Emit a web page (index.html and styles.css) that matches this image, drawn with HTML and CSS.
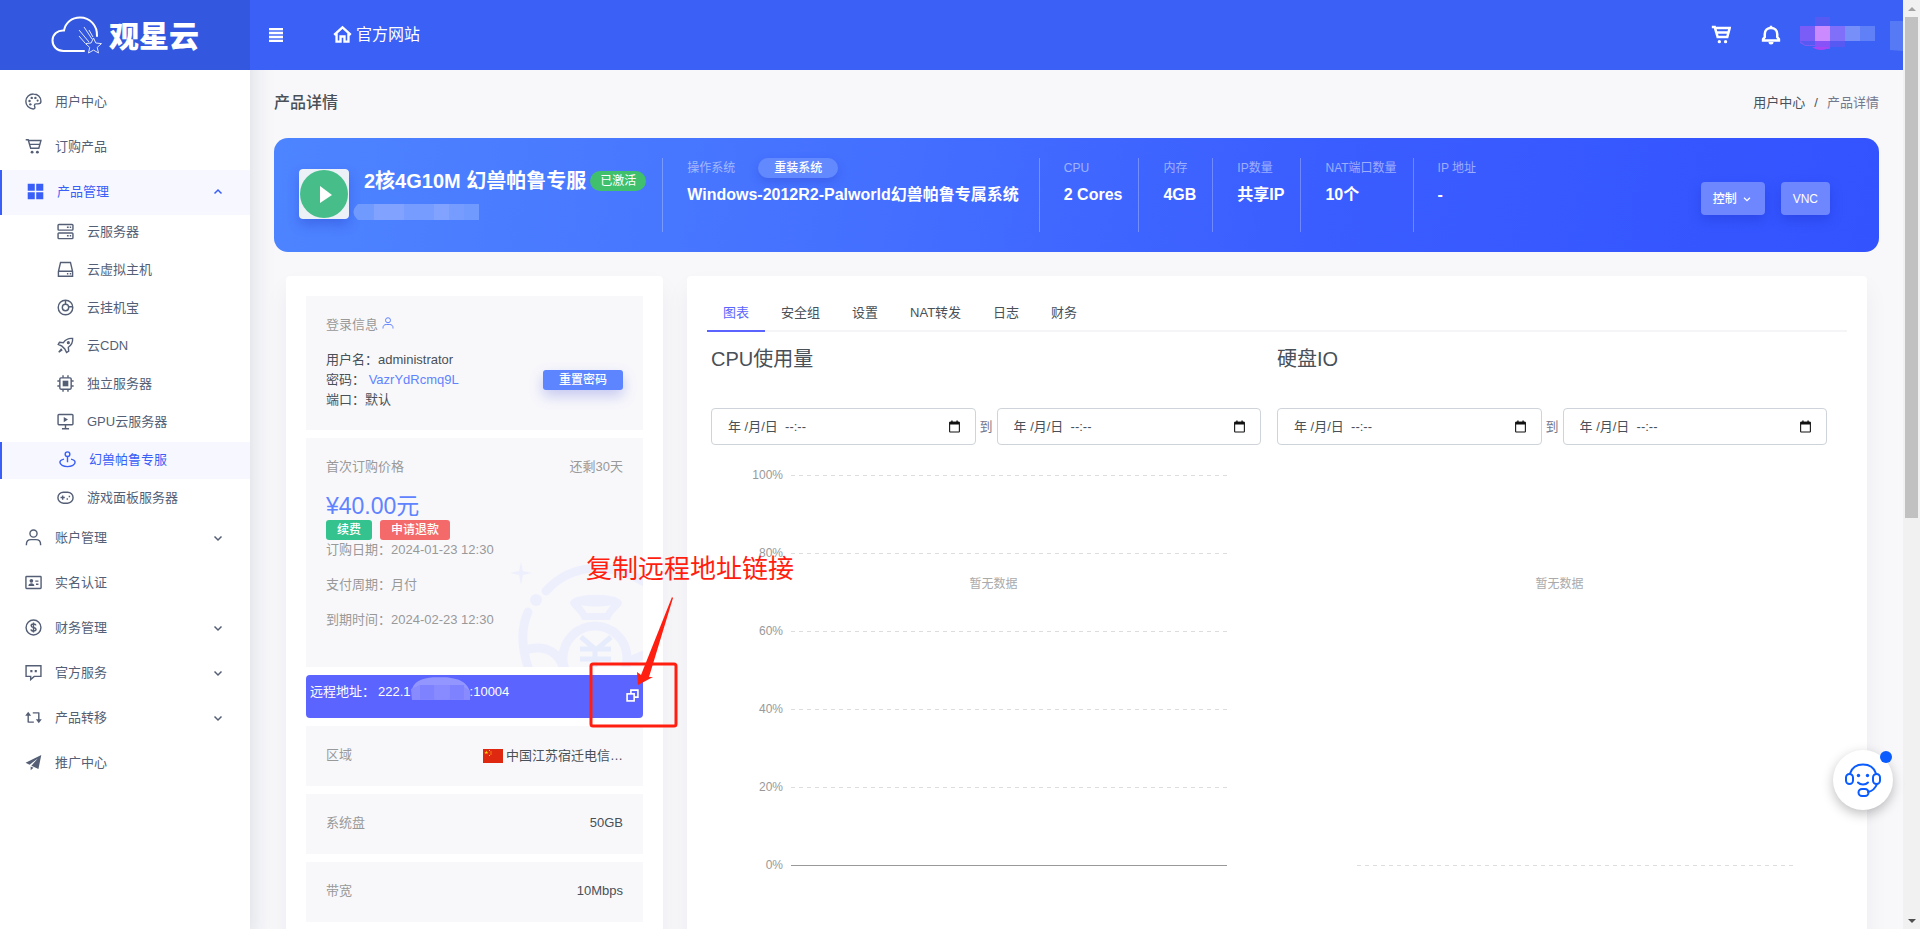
FILE: index.html
```html
<!DOCTYPE html>
<html lang="zh-CN">
<head>
<meta charset="utf-8">
<title>产品详情</title>
<link rel="stylesheet" href="styles.css">
</head>
<body>
<svg class="defs" aria-hidden="true">
  <symbol id="i-palette" viewBox="0 0 24 24"><path d="M12 1.500a10.500 10.500 0 0 0-.6 21c1.600.1 2.600-.8 2.600-2.200 0-1-.7-1.700-.7-2.700 0-1.300 1-2.200 2.300-2.200h2.900c2.300 0 4-1.300 4-3.700C22.500 5.500 17.800 1.500 12 1.500z"/><g class="solid"><circle cx="9.500" cy="6.900" r="1.700"/><circle cx="14.700" cy="6.900" r="1.700"/><circle cx="17.800" cy="10.700" r="1.500"/><circle cx="6.400" cy="11.300" r="1.700"/><circle cx="7.500" cy="16" r="1.700"/></g></symbol>
  <symbol id="i-cart" viewBox="0 0 24 24"><path d="M1 2.500H4.500L8 14.500h11.500L22.500 3.500H5M6 9h14.500"/><g class="solid"><circle cx="10" cy="20" r="2"/><circle cx="17.500" cy="20" r="2"/></g></symbol>
  <symbol id="i-grid" viewBox="0 0 24 24"><path class="solid" d="M1 1h10v10H1zM13 1h10v10H13zM1 13h10v10H1zM13 13h10v10H13z"/></symbol>
  <symbol id="i-server" viewBox="0 0 24 24"><rect x="1.500" y="2" width="21" height="8" rx="1.200"/><rect x="1.500" y="14" width="21" height="8" rx="1.200"/><path d="M14 6h2.500M18 6h2M14 18h2.500M18 18h2"/></symbol>
  <symbol id="i-hdd" viewBox="0 0 24 24"><path d="M5 2h14l3 13v6.500H2V15zM2 14.500h20"/><path d="M14 18h2M18 18h2"/></symbol>
  <symbol id="i-disc" viewBox="0 0 24 24"><circle cx="12" cy="12" r="10.300"/><circle cx="12" cy="12" r="4.500"/><path d="M12 2v5.500M16.500 11h5.500"/></symbol>
  <symbol id="i-rocket" viewBox="0 0 24 24"><path d="M22 2c-6-.5-10 1.500-13 6L3.500 7.500 1.800 10.500 7 13l4 4 2.500 5 3-2L16 14.500c4.500-3 6.500-7 6-12.500zM6.500 16.500l-4 5 5-3.500"/><circle class="solid" cx="16" cy="8" r="2.200"/></symbol>
  <symbol id="i-chip" viewBox="0 0 24 24"><rect x="4" y="4" width="16" height="16" rx="1.500"/><path class="solid" d="M8 8h8v8H8z"/><path d="M8.500 4V.5M15.500 4V.5M8.500 23.500V20M15.500 23.500V20M4 8.500H.5M4 15.500H.5M23.500 8.500H20M23.500 15.500H20"/></symbol>
  <symbol id="i-screen" viewBox="0 0 24 24"><rect x="1.500" y="2" width="21" height="14.500" rx="1.200"/><path d="M12 17v5M7 22.300h10"/><path class="solid" d="M9.500 5.500l6 3.700-6 3.700z"/></symbol>
  <symbol id="i-joy" viewBox="0 0 24 24"><circle cx="12" cy="4.500" r="3.300"/><path d="M12 8v8M7 11.500c-3.500.8-5.700 2.300-5.700 4.500 0 3.400 4.700 6 10.700 6s10.700-2.600 10.700-6c0-2.200-2.200-3.700-5.700-4.500"/></symbol>
  <symbol id="i-game" viewBox="0 0 24 24"><rect x="1.300" y="4.500" width="21.400" height="15.500" rx="7.700"/><path d="M5 12h6M8 9v6M13.500 14h2M16.500 10.500h2"/></symbol>
  <symbol id="i-user" viewBox="0 0 24 24"><circle cx="12" cy="6.500" r="5"/><path d="M2 23v-1.500c0-4 2.500-6.500 6.500-6.500h7c4 0 6.500 2.500 6.500 6.500V23"/></symbol>
  <symbol id="i-id" viewBox="0 0 24 24"><rect x="1.300" y="3.500" width="21.400" height="17" rx="1"/><g class="solid"><circle cx="9" cy="9.700" r="2.600"/><path d="M4.800 16.800c0-5 8.400-5 8.400 0z"/></g><path d="M14.500 10h4.500M15.500 14.500H19"/></symbol>
  <symbol id="i-dollar" viewBox="0 0 24 24"><circle cx="12" cy="12" r="10.500"/><path d="M15.500 9c-.3-1.300-1.500-2-3.400-2-2 0-3.400.8-3.400 2.400 0 3.500 6.900 1.700 6.900 5.200 0 1.600-1.500 2.400-3.500 2.400-2.100 0-3.500-.9-3.700-2.400M12 5v14"/></symbol>
  <symbol id="i-chat" viewBox="0 0 24 24"><path d="M1.500 2.500h21v15H13l-5 4.500v-4.500H1.500z"/><path class="solid" d="M7.500 8.500h3v3h-3zM13.700 8.500h3v3h-3z"/></symbol>
  <symbol id="i-transfer" viewBox="0 0 24 24"><path d="M4.500 18.500h8M4.500 19V8M11 5.500h9M19.500 5v11"/><path class="solid" d="M.3 9.500L4.500 4l4.200 5.500zM15.300 14.500l4.200 5.500 4.200-5.500z"/></symbol>
  <symbol id="i-plane" viewBox="0 0 24 24"><path class="solid" d="M23 1.500L.8 12.500l5.700 2.600L18 6.500 9 16.500l10 4.500zM8 17.500v5.500l4-3.700z"/></symbol>
  <symbol id="i-down" viewBox="0 0 24 24"><path d="M5 9l7 7 7-7"/></symbol>
  <symbol id="i-home" viewBox="0 0 24 24"><path d="M1.500 12.500L12 3l10.500 9.500M4.500 10.500V21h5v-6.500h5V21h5V10.500"/></symbol>
  <symbol id="i-bell" viewBox="0 0 24 24"><path d="M2.500 18.500v-1.500l2-2.500V11c0-4.500 3-7.500 7.500-7.500s7.500 3 7.500 7.500v3.500l2 2.500v1.500zM12 3.500V1"/><path class="solid" d="M9 20.500h6a3 3 0 0 1-6 0z"/></symbol>
  <symbol id="i-copy" viewBox="0 0 24 24"><rect x="2" y="9" width="13" height="13"/><path d="M9 9V2h13v13h-7"/></symbol>
  <symbol id="i-calendar" viewBox="0 0 24 24"><rect x="3" y="4" width="18" height="18" rx="1"/><path class="solid" d="M3 3h18v5.500H3zM6 1h2.500v4H6zM15.500 1H18v4h-2.500z"/></symbol>
</svg>

<div class="shell">
  <aside class="sidebar">
    <a class="brand" href="#">
      <svg class="cloud" viewBox="0 0 52 38" aria-hidden="true"><path d="M33 35H12.500C6 35 1.500 30.500 1.500 24.500S6.500 14 13 14.500C14.500 6.500 21 1.500 29 1.500c10 0 17.500 8 17 18.500" class="cl"/><path d="M28 14l10 12M33 11l8 12M38 14l4 7M28 20l6 7" class="st"/><path d="M42.500 22l2.300 5 5.700.6-4.300 3.800 1.300 5.600-5-2.900-5 2.900 1.200-5.600-4.200-3.800 5.600-.6z" class="st"/></svg>
      <span class="brand-name">观星云</span>
    </a>
    <nav class="menu">
      <a class="item" href="#"><svg><use href="#i-palette"/></svg><span>用户中心</span></a>
      <a class="item" href="#"><svg><use href="#i-cart"/></svg><span>订购产品</span></a>
      <a class="item active" href="#"><svg><use href="#i-grid"/></svg><span>产品管理</span><svg class="chev up"><use href="#i-down"/></svg></a>
      <div class="submenu">
        <a class="item sub" href="#"><svg><use href="#i-server"/></svg><span>云服务器</span></a>
        <a class="item sub" href="#"><svg><use href="#i-hdd"/></svg><span>云虚拟主机</span></a>
        <a class="item sub" href="#"><svg><use href="#i-disc"/></svg><span>云挂机宝</span></a>
        <a class="item sub" href="#"><svg><use href="#i-rocket"/></svg><span>云CDN</span></a>
        <a class="item sub" href="#"><svg><use href="#i-chip"/></svg><span>独立服务器</span></a>
        <a class="item sub" href="#"><svg><use href="#i-screen"/></svg><span>GPU云服务器</span></a>
        <a class="item sub active" href="#"><svg><use href="#i-joy"/></svg><span>幻兽帕鲁专服</span></a>
        <a class="item sub" href="#"><svg><use href="#i-game"/></svg><span>游戏面板服务器</span></a>
      </div>
      <a class="item" href="#"><svg><use href="#i-user"/></svg><span>账户管理</span><svg class="chev"><use href="#i-down"/></svg></a>
      <a class="item" href="#"><svg><use href="#i-id"/></svg><span>实名认证</span></a>
      <a class="item" href="#"><svg><use href="#i-dollar"/></svg><span>财务管理</span><svg class="chev"><use href="#i-down"/></svg></a>
      <a class="item" href="#"><svg><use href="#i-chat"/></svg><span>官方服务</span><svg class="chev"><use href="#i-down"/></svg></a>
      <a class="item" href="#"><svg><use href="#i-transfer"/></svg><span>产品转移</span><svg class="chev"><use href="#i-down"/></svg></a>
      <a class="item" href="#"><svg><use href="#i-plane"/></svg><span>推广中心</span></a>
    </nav>
  </aside>

  <div class="page">
    <header class="topbar">
      <button class="burger" aria-label="菜单"><i></i><i></i><i></i><i></i></button>
      <a class="site" href="#"><svg><use href="#i-home"/></svg>官方网站</a>
      <div class="tools">
        <button aria-label="购物车"><svg><use href="#i-cart"/></svg></button>
        <button aria-label="通知"><svg><use href="#i-bell"/></svg></button>
        <svg class="account" viewBox="0 0 120 38" aria-hidden="true"><path fill="#7a5cf6" d="M0 10h15v20H5l-5-3z"/><path fill="#565af3" d="M15 1h15v9H15zM0 25h15v4H5zM30 25h15v6H30z"/><path fill="#cb8bff" d="M15 10h15v15H15z"/><path fill="#8753f8" d="M15 25h15v8H15z"/><path fill="#a646f5" d="M12 31h18c-5 4-13 4-18 0z"/><path fill="#7f6ff9" d="M30 10h15v15H30z"/><path fill="#7790f9" d="M45 10h15v15H45z"/><path fill="#6080f8" d="M60 10h15v15H60z"/><path fill="#5679f6" d="M90 5h13v30l-13-1z"/></svg>
      </div>
    </header>

    <main class="content">
      <div class="heading">
        <h1>产品详情</h1>
        <nav class="crumbs"><a href="#">用户中心</a><i>/</i><span>产品详情</span></nav>
      </div>

      <section class="hero">
        <div class="spec product">
          <svg class="status" viewBox="0 0 50 50" aria-hidden="true"><rect width="50" height="50" rx="3" fill="#ecf1f7"/><circle cx="25" cy="25" r="24" fill="#47be8a"/><path d="M21 17l12 9-12 8z" fill="#fff"/></svg>
          <div class="product-text">
            <div class="product-line"><strong>2核4G10M 幻兽帕鲁专服</strong><span class="badge">已激活</span></div>
            <svg class="mask" viewBox="0 0 126 16" aria-hidden="true"><path fill="#709afe" d="M5 0h121v16H5C-1 11-1 5 5 0z"/><path fill="#81a3ff" d="M21 0h30v16H21zM81 0h15v16H81z"/><path fill="#779cff" d="M51 0h30v16H51zM96 0h15v16H96z"/></svg>
          </div>
        </div>
        <div class="spec os"><div class="label">操作系统 <button class="pill">重装系统</button></div><b>Windows-2012R2-Palworld幻兽帕鲁专属系统</b></div>
        <div class="spec"><div class="label">CPU</div><b>2 Cores</b></div>
        <div class="spec"><div class="label">内存</div><b>4GB</b></div>
        <div class="spec"><div class="label">IP数量</div><b>共享IP</b></div>
        <div class="spec"><div class="label">NAT端口数量</div><b>10个</b></div>
        <div class="spec"><div class="label">IP 地址</div><b>-</b></div>
        <div class="actions"><button>控制<svg><use href="#i-down"/></svg></button><button>VNC</button></div>
      </section>

      <div class="columns">
        <section class="card info">
          <div class="box login">
            <div class="muted">登录信息 <svg class="mini"><use href="#i-user"/></svg></div>
            <div class="login-row">
              <div class="creds"><div>用户名：administrator</div><div>密码： <a href="#">VazrYdRcmq9L</a></div><div>端口：默认</div></div>
              <button class="small blue">重置密码</button>
            </div>
          </div>
          <div class="box billing">
            <svg class="bag" viewBox="0 0 129 105" aria-hidden="true"><g fill="none" stroke="#edf0fc" stroke-width="9" stroke-linecap="round"><path d="M14 50C6 68 8 88 15 108M32 29C58 0 100 0 134 22"/><path d="M15 87c20-4 32 6 35 22M118 98l14-6"/><circle cx="81" cy="96" r="32"/></g><path fill="#edf0fc" fill-rule="evenodd" d="M7 0l2 9 9 2-9 2-2 10-2-10-9-2 9-2zM56 41c0-11 52-11 52 0 0 4-10 9-12 17H68c-2-8-12-13-12-17zm11 2l6 8h18l6-8c-8 2-22 2-30 0z"/><circle cx="22" cy="38" r="6" fill="#edf0fc"/><path d="M67 75l15 13 15-13M66 87h31M66 97h31M81 88v20" fill="none" stroke="#e6ecfb" stroke-width="5"/></svg>
            <div class="split muted"><span>首次订购价格</span><span>还剩30天</span></div>
            <div class="price">¥40.00元</div>
            <div class="pay"><button class="small green">续费</button><button class="small red">申请退款</button></div>
            <div class="dates muted"><div>订购日期：2024-01-23 12:30</div><div>支付周期：月付</div><div>到期时间：2024-02-23 12:30</div></div>
          </div>
          <div class="remote">
            <span>远程地址：</span><span class="ip">222.1</span><svg class="veil" viewBox="0 0 60 23" aria-hidden="true"><path fill="#9396ff" d="M1 23V12C4 2 16 0 26 0h10c7 1 9 2 11 2 7 2 12 8 13 13v8z"/><path fill="#7f82ff" d="M9 8h15v15H9zM39 8h15v15H39z"/><path fill="#888bff" d="M0 12l9-4v15H1zM24 8h15v15H24zM54 10l6 4v9h-6z"/></svg><span>:10004</span>
            <button class="copy" aria-label="复制"><svg><use href="#i-copy"/></svg></button>
          </div>
          <div class="box fact"><span class="muted">区域</span><span class="place"><svg class="flag" viewBox="0 0 20 14" aria-hidden="true"><path fill="#de2910" d="M0 0h20v14H0z"/><path fill="#ffde00" d="M3.300 1.500l.5 1.400h1.500l-1.200.9.500 1.400-1.300-.9-1.200.9.400-1.400-1.200-.9h1.500zM6 1h1v1H6zM7.500 2.500h1v1h-1zM7.500 4.500h1v1h-1zM6 6h1v1H6z"/></svg>中国江苏宿迁电信…</span></div>
          <div class="box fact"><span class="muted">系统盘</span><span>50GB</span></div>
          <div class="box fact"><span class="muted">带宽</span><span>10Mbps</span></div>

          <div class="note">
            <p>复制远程地址链接</p>
            <svg viewBox="0 0 92 132" aria-hidden="true"><rect x="2" y="67" width="85" height="62" rx="2" fill="none" stroke="#ff1e10" stroke-width="3"/><path fill="#ff1e10" d="M84 1L60 80l4 0-15 8-1-13 4 3L83 0z"/></svg>
          </div>
        </section>

        <section class="card detail">
          <div class="tabs" role="tablist"><button role="tab" class="on">图表</button><button role="tab">安全组</button><button role="tab">设置</button><button role="tab">NAT转发</button><button role="tab">日志</button><button role="tab">财务</button></div>
          <div class="charts">
            <div class="chart">
              <h2>CPU使用量</h2>
              <div class="range">
                <div class="when"><input aria-label="CPU开始时间" value="年 /月/日&nbsp;&nbsp;--:--"><svg><use href="#i-calendar"/></svg></div>
                <span>到</span>
                <div class="when"><input aria-label="CPU结束时间" value="年 /月/日&nbsp;&nbsp;--:--"><svg><use href="#i-calendar"/></svg></div>
              </div>
              <div class="plot">
                <div class="tick"><span>100%</span><i></i></div>
                <div class="tick"><span>80%</span><i></i></div>
                <div class="tick"><span>60%</span><i></i></div>
                <div class="tick"><span>40%</span><i></i></div>
                <div class="tick"><span>20%</span><i></i></div>
                <div class="tick"><span>0%</span><i class="base"></i></div>
                <div class="empty">暂无数据</div>
              </div>
            </div>
            <div class="chart">
              <h2>硬盘IO</h2>
              <div class="range">
                <div class="when"><input aria-label="硬盘开始时间" value="年 /月/日&nbsp;&nbsp;--:--"><svg><use href="#i-calendar"/></svg></div>
                <span>到</span>
                <div class="when"><input aria-label="硬盘结束时间" value="年 /月/日&nbsp;&nbsp;--:--"><svg><use href="#i-calendar"/></svg></div>
              </div>
              <div class="plot bare">
                <div class="tick"><span></span><i></i></div>
                <div class="empty">暂无数据</div>
              </div>
            </div>
          </div>
        </section>
      </div>
    </main>
    <button class="service" aria-label="在线客服">
      <svg viewBox="0 0 36 34" aria-hidden="true"><g fill="none" stroke="#0a5cff" stroke-width="2" stroke-linecap="round"><path d="M5 10.500C7 4.500 12 1.500 18 1.500s11 3 13 9M32 21c-1.500 4-4.500 7-9 8"/><rect x="1" y="11" width="7" height="10" rx="3.500"/><rect x="28" y="11" width="7" height="10" rx="3.500"/><rect x="13.500" y="26" width="10" height="7" rx="3.500"/><path d="M13 19.500c2.500 2.700 7.500 2.700 10 0"/></g><circle cx="13.500" cy="12.500" r="1.700" fill="#0a5cff"/><circle cx="22.500" cy="12.500" r="1.700" fill="#0a5cff"/></svg>
    </button>
  </div>

  <div class="scroll" aria-hidden="true"><i class="tri up"></i><div class="track"><div class="thumb"></div></div><i class="tri"></i></div>
</div>
</body>
</html>
```
FILE: styles.css
```css
* { box-sizing: border-box; }
body {
  margin: 0;
  font: 13px/20px "Liberation Sans", "Noto Sans CJK SC", sans-serif;
  color: #495057;
  background: #f8f8fb;
}
a { color: inherit; text-decoration: none; }
i { font-style: normal; }
button { font: inherit; color: inherit; border: 0; padding: 0; background: none; cursor: pointer; }
svg { fill: none; stroke: currentColor; stroke-width: 2; flex: none; }
svg .solid { fill: currentColor; stroke: none; }
svg[viewBox] { stroke: none; }
.defs { position: absolute; width: 0; height: 0; }

.shell { display: grid; grid-template-columns: 250px minmax(0, 1fr) 17px; grid-template-rows: minmax(0, 1fr); height: 100vh; overflow: hidden; }

/* sidebar */
.sidebar { background: #fff; box-shadow: 0 12px 24px rgba(18, 38, 63, .15); z-index: 1; }
.brand { display: flex; align-items: center; justify-content: center; gap: 6px; height: 70px; background: #3358df; color: #fff; }
.cloud { width: 52px; height: 38px; }
.cloud .cl { stroke: #fff; stroke-width: 2; fill: none; stroke-linecap: round; }
.cloud .st { stroke: #dfe6fb; stroke-width: 1; fill: none; }
.brand-name { padding-top: 4px; font-size: 30px; line-height: 40px; font-weight: 900; }
.menu { padding-top: 10px; color: #545f76; }
.item { display: flex; align-items: center; gap: 13px; height: 45px; padding: 0 26px 2px 25px; }
.item svg { width: 17px; height: 17px; }
.item.active { color: #3a5ff6; background: #f7f8ff; border-left: 2px solid #3a5ff6; }
.item .chev { width: 12px; height: 12px; margin-left: auto; stroke-width: 3; }
.chev.up { transform: rotate(180deg); }
.submenu { display: grid; gap: 1px; margin: -1px 0; }
.item.sub { height: 37px; padding-left: 57px; }

/* top bar */
.page { min-width: 0; position: relative; }
.topbar { position: relative; z-index: 2; display: flex; align-items: center; height: 70px; padding-left: 19px; background: #3a60f6; color: #fff; }
.burger { display: grid; gap: 2px; width: 14px; background: rgba(255, 255, 255, .3); }
.burger i { height: 2px; background: #fff; }
.site { display: flex; align-items: center; gap: 4px; margin-left: 50px; padding-bottom: 1px; font-size: 16px; }
.site svg { width: 19px; height: 19px; stroke-width: 3; }
.tools { display: flex; align-items: center; margin-left: auto; }
.tools button { display: flex; margin-right: 30px; padding-bottom: 1px; }
.tools button + button { margin-right: 19px; }
.tools button svg { width: 20px; height: 20px; stroke-width: 3; }
.account { width: 120px; height: 38px; margin: 0 -17px 0 0; }

.content { padding: 20px 24px 0; }
.heading { display: flex; justify-content: space-between; align-items: center; height: 26px; margin-bottom: 22px; }
.heading h1 { margin: 0; font-size: 16px; line-height: 26px; font-weight: 500; }
.crumbs { display: flex; gap: 8px; }
.crumbs a { color: #495057; }
.crumbs span { color: #74788d; }
.crumbs i { padding: 0 1px; }

/* product banner */
.hero { display: flex; height: 114px; padding: 20px 49px 20px 25px; border-radius: 14px; background: linear-gradient(100deg, #4d84ff, #4571ff 35%, #3a5dff 65%, #3353ff); color: #fff; }
.spec { height: 74px; padding: 0 16px 0 24px; border-left: 1px solid rgba(255, 255, 255, .27); white-space: nowrap; }
.spec.product { display: flex; padding-left: 0; border-left: 0; }
.spec.os { padding-right: 20px; }
.status { width: 50px; height: 50px; margin-top: 11px; border-radius: 4px; box-shadow: 0 6px 12px rgba(30, 50, 190, .3); }
.product-text { padding: 11px 0 0 4px; }
.product-line { display: flex; align-items: center; gap: 4px; height: 24px; padding-left: 11px; }
.product-line strong { font-size: 20px; line-height: 24px; }
.badge { width: 56px; border-radius: 10px; background: #40bf6c; font-size: 12px; line-height: 20px; text-align: center; }
.mask { display: block; width: 126px; height: 16px; margin-top: 11px; }
.spec .label { display: flex; gap: 23px; font-size: 12px; line-height: 20px; color: rgba(255, 255, 255, .5); }
.spec b { display: block; margin-top: 5px; font-size: 16px; line-height: 24px; }
.pill { width: 80px; height: 20px; border-radius: 10px; background: #6389ff; color: #fff; font-weight: 500; box-shadow: 0 4px 10px rgba(40, 60, 200, .3); }
.actions { display: flex; align-items: flex-start; gap: 16px; margin-left: auto; padding-top: 24px; }
.actions button { display: flex; align-items: center; gap: 5px; height: 33px; padding: 0 12px; border-radius: 4px; background: #6e87ff; font-size: 12px; font-weight: 500; box-shadow: 0 5px 12px rgba(30, 50, 200, .4); }
.actions svg { width: 10px; height: 10px; margin-right: 1px; stroke-width: 3; }

/* cards */
.columns { display: grid; grid-template-columns: 377px minmax(0, 1fr); gap: 24px; padding: 24px 12px 0; }
.card { position: relative; min-height: 700px; padding: 20px; border-radius: 4px; background: #fff; box-shadow: 0 12px 24px rgba(18, 38, 63, .05); }
.info { display: flex; flex-direction: column; gap: 8px; }
.box { background: #f8f8fb; padding: 19px 20px; }
.muted { color: #999; }
.login { height: 134px; }
.mini { width: 12px; height: 12px; color: #6083ff; }
.login-row { display: flex; justify-content: space-between; align-items: center; margin-top: 15px; }
.creds { line-height: 20px; }
.creds a { color: #6083ff; }
.small { height: 20px; border-radius: 3px; color: #fff; font-size: 12px; font-weight: 500; line-height: 19px; padding: 1px 11px 0; }
.small.blue { width: 80px; background: #5c85ff; box-shadow: 0 6px 14px rgba(80, 90, 220, .3); }
.small.green { background: #34c38f; }
.small.red { background: #f46a6a; }
.billing { position: relative; height: 229px; overflow: hidden; }
.bag { position: absolute; right: 0; bottom: 0; width: 129px; height: 105px; overflow: visible; }
.split { display: flex; justify-content: space-between; }
.price { position: relative; margin-top: 15px; font-size: 23px; line-height: 28px; color: #6083ff; }
.pay { display: flex; gap: 8px; }
.dates { display: grid; gap: 15px; position: relative; }
.remote { display: flex; height: 43px; padding: 2px 4px 0; border-radius: 4px; background: #5c64ff; color: #fff; line-height: 30px; }
.ip { margin-left: 3px; }
.veil { width: 59px; height: 23px; }
.copy { margin: 8px 0 0 auto; height: 20px; }
.copy svg { width: 13px; height: 13px; display: block; stroke-width: 3; }
.fact { display: flex; justify-content: space-between; height: 60px; }
.place { display: flex; align-items: center; gap: 3px; }
.flag { width: 20px; height: 14px; }

/* red pointer laid over the card */
.note { position: absolute; left: 300px; top: 275px; color: #ff1e10; pointer-events: none; z-index: 2; }
.note p { margin: 0; font-size: 26px; line-height: 36px; white-space: nowrap; }
.note svg { display: block; width: 92px; height: 132px; margin: 10px 0 0 3px; }

/* chart card */
.tabs { display: flex; border-bottom: 2px solid #f5f5f8; }
.tabs button { height: 36px; margin-bottom: -2px; padding: 0 16px; border-bottom: 2px solid transparent; }
.tabs .on { color: #5c64ff; border-color: #5c64ff; }
.charts { display: grid; grid-template-columns: 1fr 1fr; padding: 0 4px; }
.chart { padding-right: 16px; }
.chart h2 { margin: 12px 0 34px; font-size: 20px; line-height: 30px; font-weight: 400; }
.range { display: flex; align-items: center; gap: 4px; color: #74788d; }
.when { position: relative; flex: 1; min-width: 0; }
.when input { display: block; width: 100%; height: 37px; padding: 0 16px 2px; border: 1px solid #ced4da; border-radius: 4px; background: #fff; font: inherit; color: #495057; }
.when svg { position: absolute; right: 15px; top: 12px; width: 13px; height: 13px; color: #111; }
.plot { position: relative; display: grid; gap: 60px; margin-top: 21px; padding-right: 34px; font-size: 12px; }
.plot.bare { padding-top: 390px; }
.tick { display: flex; align-items: center; gap: 8px; height: 18px; color: #999; }
.tick span { width: 72px; text-align: right; }
.tick i { flex: 1; height: 1px; background: repeating-linear-gradient(90deg, #ddd 0 4px, transparent 4px 8px); }
.tick .base { background: #999; }
.empty { position: absolute; left: 0; right: 0; top: 108px; padding-left: 15px; text-align: center; color: #aaa; }

/* floating service button */
.service { position: absolute; right: 10px; bottom: 119px; display: grid; place-items: center; width: 60px; height: 60px; border-radius: 50%; background: #fff; box-shadow: 0 4px 12px rgba(0, 0, 0, .25); }
.service svg { width: 36px; height: 34px; }
.service::after { content: ""; position: absolute; right: 1px; top: 1px; width: 12px; height: 12px; border-radius: 50%; background: #0a5cff; }

.scroll { display: flex; flex-direction: column; background: #f1f1f1; padding: 0 2px; }
.track { flex: 1; }
.thumb { height: 56%; background: #c1c1c1; }
.tri { height: 17px; display: grid; place-items: center; }
.tri::before { content: ""; border: 4px solid transparent; border-top-color: #505050; border-bottom: 0; }
.tri.up::before { border: 4px solid transparent; border-bottom-color: #a3a3a3; border-top: 0; }
```
